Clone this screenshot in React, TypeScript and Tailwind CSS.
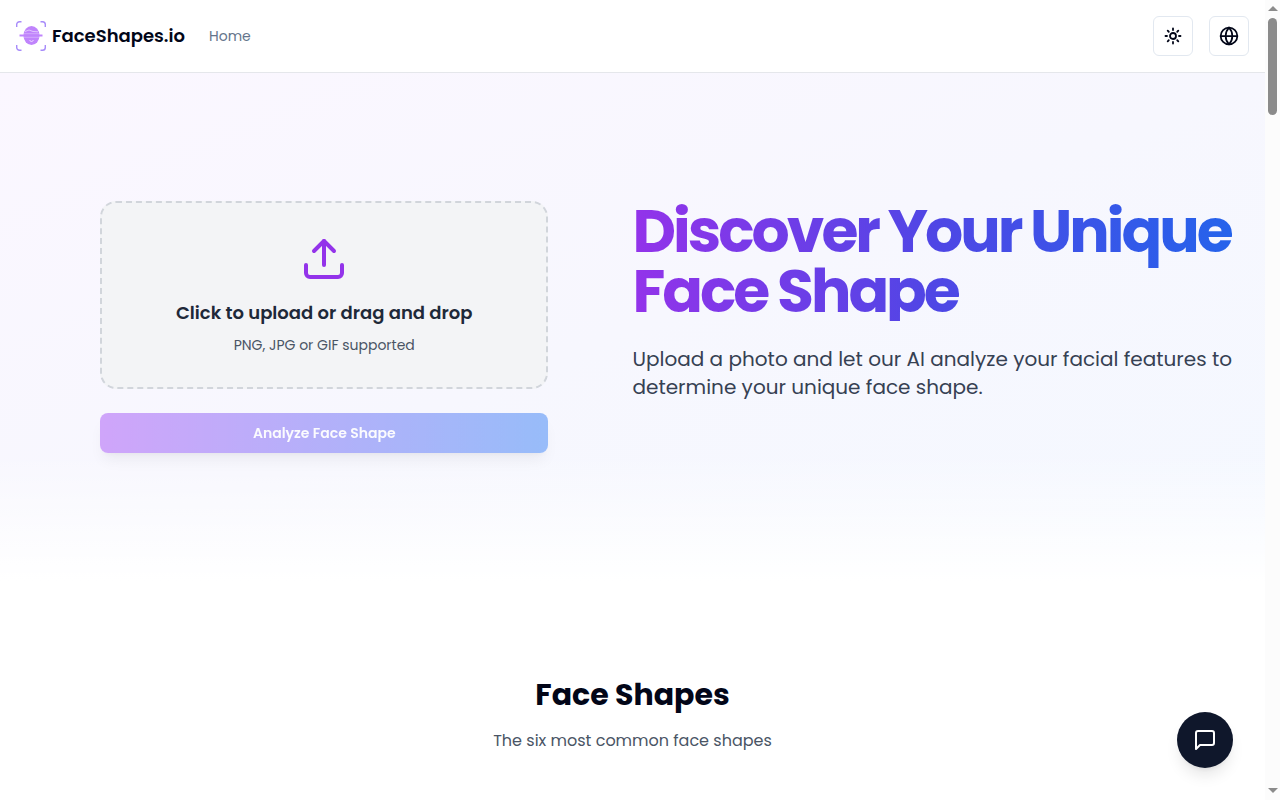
import { Globe, Sun, Upload } from "lucide-react";

const fontClass = "font-['Poppins','Inter',sans-serif]";

const iconButtonClass =
  "flex size-10 items-center justify-center rounded-md border border-slate-200 bg-white text-slate-950 transition hover:bg-slate-100";

function Logo() {
  return (
    <svg viewBox="0 0 30 30" className="size-[30px]" fill="none" aria-hidden="true">
      <path
        d="M.7 6V3.500A2.800 2.800 0 0 1 3.500.7H5.500M24.500.7h2A2.800 2.800 0 0 1 29.300 3.500V6M29.300 24v2.500a2.800 2.800 0 0 1-2.800 2.800h-2M5.500 29.300h-2A2.800 2.800 0 0 1 .7 26.500V24"
        stroke="#a78bfa"
        strokeWidth="1.4"
      />
      <ellipse cx="15.500" cy="14.500" rx="8" ry="9.600" fill="#c084fc" />
      <path d="M9 10.500l4-1.500 4 1.500 5 .3" stroke="#e9d5ff" strokeWidth="0.8" />
      <path d="M13.500 19.500l2 1 2-1" stroke="#f3e8ff" strokeWidth="0.9" />
      <path d="M7.500 12.800h16M7.500 16.200h16" stroke="#dfc1fe" strokeWidth="0.7" />
      <path d="M3.500 14.500h23" stroke="#c084fc" strokeWidth="2" />
    </svg>
  );
}

function ChatIcon() {
  return (
    <svg
      viewBox="0 0 24 24"
      className="size-6"
      fill="none"
      stroke="currentColor"
      strokeWidth="2"
      strokeLinecap="round"
      strokeLinejoin="round"
      aria-hidden="true"
    >
      <path d="M21 15a2 2 0 0 1-2 2H7l-4 4V5a2 2 0 0 1 2-2h14a2 2 0 0 1 2 2z" />
    </svg>
  );
}

function Header() {
  return (
    <header className="flex items-center justify-between border-b border-gray-200 bg-white px-4 py-4">
      <div className="flex items-center gap-6">
        <a href="#top" className="flex items-center gap-1.5 text-lg font-semibold text-slate-950">
          <Logo />
          FaceShapes.io
        </a>
        <nav>
          <a href="#home" className="text-sm text-[#64748b] hover:text-slate-900">
            Home
          </a>
        </nav>
      </div>
      <div className="flex items-center gap-4">
        <button type="button" aria-label="Toggle theme" className={iconButtonClass}>
          <Sun className="size-[18px]" strokeWidth={2.4} />
        </button>
        <button type="button" aria-label="Change language" className={iconButtonClass}>
          <Globe className="size-5" strokeWidth={2.1} />
        </button>
      </div>
    </header>
  );
}

function Hero() {
  return (
    <section className="relative bg-linear-to-br/srgb from-[#fbf7ff] via-[#f7f7fe] to-[#f4f8ff] py-32">
      <div className="absolute inset-x-0 bottom-0 h-32 bg-linear-to-t from-white to-transparent" />
      <div className="relative grid grid-cols-2 px-4">
        <div className="mx-auto w-full max-w-md">
          <label
            htmlFor="photo"
            className="flex cursor-pointer flex-col items-center rounded-2xl border-2 border-dashed border-[#d1d5db] bg-gray-100 p-8"
          >
            <Upload className="size-12 text-[#9333ea]" />
            <span className="mt-4 text-lg font-semibold text-gray-800">Click to upload or drag and drop</span>
            <span className="mt-2 text-sm text-gray-600">PNG, JPG or GIF supported</span>
            <input id="photo" type="file" accept="image/*" className="sr-only" />
          </label>
          <button
            type="button"
            disabled
            className="mt-6 h-10 w-full rounded-lg bg-linear-to-r/srgb from-[#a855f7] to-[#3b82f6] text-sm font-semibold text-white opacity-50 shadow-lg"
          >
            Analyze Face Shape
          </button>
        </div>
        <div className="pr-4">
          <h1 className="bg-linear-to-r/srgb from-[#9333ea] via-[#4f46e5] to-[#2563eb] bg-clip-text text-6xl/[60px] font-bold tracking-tighter text-transparent">
            Discover Your Unique Face Shape
          </h1>
          <p className="mt-6 text-xl text-gray-700">
            Upload a photo and let our AI analyze your facial features to determine your unique face shape.
          </p>
        </div>
      </div>
    </section>
  );
}

function Scrollbar() {
  return (
    <div aria-hidden="true" className="flex w-[15px] shrink-0 flex-col items-center justify-between bg-[#fcfcfc] py-1.5">
      <div className="flex flex-col items-center gap-1.5">
        <svg viewBox="0 0 10 6" className="h-[6px] w-[10px]">
          <path d="M0 5L5 0l5 5z" fill="#8b8b8b" />
        </svg>
        <div className="h-[97px] w-[9px] rounded-full bg-[#8b8b8b]" />
      </div>
      <svg viewBox="0 0 10 6" className="h-[6px] w-[10px]">
        <path d="M0 0l5 5 5-5z" fill="#8b8b8b" />
      </svg>
    </div>
  );
}

export default function App() {
  return (
    <div className={`flex h-screen overflow-hidden bg-white ${fontClass}`}>
      <div className="min-w-0 flex-1">
        <Header />
        <main>
          <Hero />
          <section className="py-24 text-center">
            <h2 className="text-3xl font-bold text-slate-950">Face Shapes</h2>
            <p className="mt-4 text-base text-gray-600">The six most common face shapes</p>
          </section>
        </main>
      </div>
      <Scrollbar />
      <button
        type="button"
        aria-label="Open chat"
        className="fixed right-[47px] bottom-8 flex size-14 items-center justify-center rounded-full bg-slate-900 text-white shadow-lg"
      >
        <ChatIcon />
      </button>
    </div>
  );
}
